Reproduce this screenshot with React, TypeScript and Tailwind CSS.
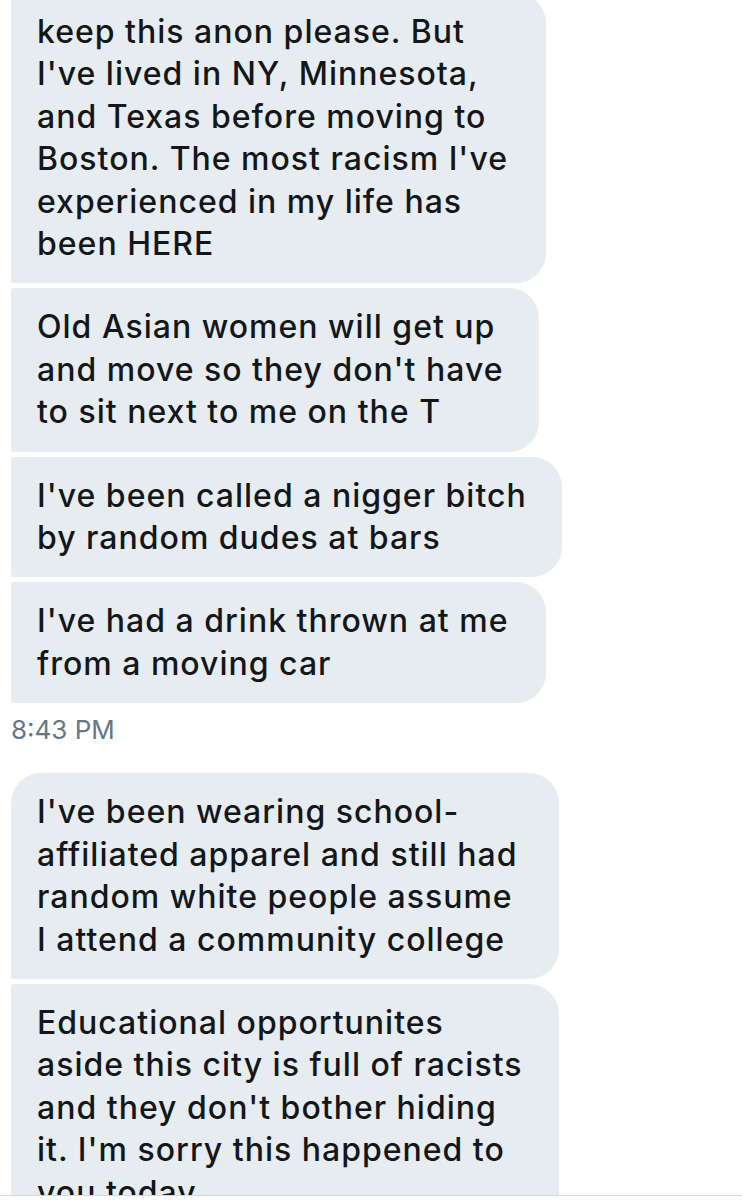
const groups: { time?: string; bubbles: { w: string; first?: boolean; lines: string[] }[] }[] = [
  {
    time: "8:43 PM",
    bubbles: [
      {
        w: "w-[535px]",
        lines: [
          "keep this anon please. But",
          "I've lived in NY, Minnesota,",
          "and Texas before moving to",
          "Boston. The most racism I've",
          "experienced in my life has",
          "been HERE",
        ],
      },
      {
        w: "w-[528px]",
        lines: ["Old Asian women will get up", "and move so they don't have", "to sit next to me on the T"],
      },
      { w: "w-[551px]", lines: ["I've been called a nigger bitch", "by random dudes at bars"] },
      { w: "w-[535px]", lines: ["I've had a drink thrown at me", "from a moving car"] },
    ],
  },
  {
    bubbles: [
      {
        w: "w-[548px]",
        first: true,
        lines: [
          "I've been wearing school-",
          "affiliated apparel and still had",
          "random white people assume",
          "I attend a community college",
        ],
      },
      {
        w: "w-[548px]",
        lines: [
          "Educational opportunites",
          "aside this city is full of racists",
          "and they don't bother hiding",
          "it. I'm sorry this happened to",
          "you today",
        ],
      },
    ],
  },
];

export default function App() {
  return (
    <div className="flex h-[1200px] w-[742px] flex-col overflow-hidden bg-white" style={{ fontFamily: "Inter, 'Noto Sans', sans-serif" }}>
      <div className="flex-1 overflow-hidden px-[11px]">
        <div className="-mt-[7px] flex flex-col">
          {groups.map((g, gi) => (
            <div key={gi} className="flex flex-col gap-[5px]">
              {g.bubbles.map((b, bi) => (
                <div
                  key={bi}
                  className={`${b.w} rounded-r-[30px] ${b.first ? "rounded-tl-[30px]" : "rounded-tl-[3px]"} rounded-bl-[3px] bg-[#e6ecf0] px-[26px] py-[18px] text-[32px] font-medium leading-[42.4px] tracking-[1px] text-[#14171a]`}
                >
                  {b.lines.map((l, li) => (
                    <div key={li} className="whitespace-nowrap">
                      {l}
                    </div>
                  ))}
                </div>
              ))}
              {g.time && (
                <div className="mt-[6px] mb-[27px] text-[26px] leading-[32px] text-[#657786]">{g.time}</div>
              )}
            </div>
          ))}
        </div>
      </div>
      <div className="h-[5px] border-t border-[#d6dbe0] bg-white" />
    </div>
  );
}
